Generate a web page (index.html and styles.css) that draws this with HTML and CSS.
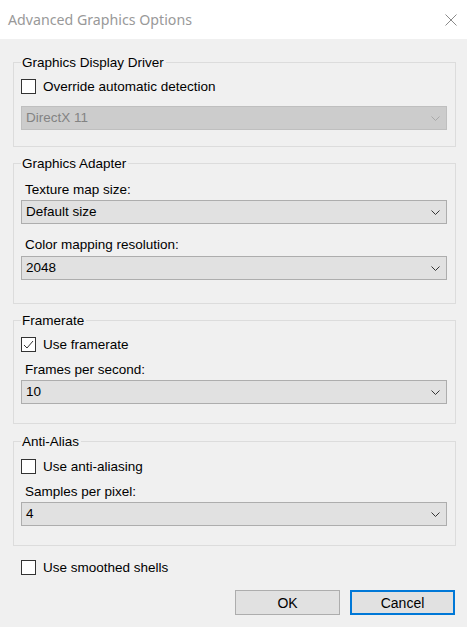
FILE: index.html
```html
<!DOCTYPE html>
<html>
<head>
<meta charset="utf-8">
<link rel="stylesheet" href="styles.css">
</head>
<body>
<div class="window">
  <div class="titlebar">
    <span class="title">Advanced Graphics Options</span>
    <svg class="close" width="12" height="12" viewBox="0 0 12 12"><path d="M0.5 0.5 L11.5 11.5 M11.5 0.5 L0.5 11.5" stroke="#8a8a8a" stroke-width="1" fill="none"/></svg>
  </div>
  <div class="content">
    <div class="group g1">
      <div class="legend">Graphics Display Driver</div>
      <div class="check c1"><span class="box"></span><span class="clabel">Override automatic detection</span></div>
      <div class="select disabled s1"><span class="val">DirectX 11</span><svg class="chev" width="9" height="5" viewBox="0 0 9 5"><path d="M0.5 0.5 L4.5 4.5 L8.5 0.5" stroke="#a8a8a8" fill="none"/></svg></div>
    </div>
    <div class="group g2">
      <div class="legend">Graphics Adapter</div>
      <div class="label l1">Texture map size:</div>
      <div class="select s2"><span class="val">Default size</span><svg class="chev" width="9" height="5" viewBox="0 0 9 5"><path d="M0.5 0.5 L4.5 4.5 L8.5 0.5" stroke="#333" fill="none"/></svg></div>
      <div class="label l2">Color mapping resolution:</div>
      <div class="select s3"><span class="val">2048</span><svg class="chev" width="9" height="5" viewBox="0 0 9 5"><path d="M0.5 0.5 L4.5 4.5 L8.5 0.5" stroke="#333" fill="none"/></svg></div>
    </div>
    <div class="group g3">
      <div class="legend">Framerate</div>
      <div class="check c1"><span class="box"><svg width="13" height="13" viewBox="0 0 13 13"><path d="M2 7 L5 10 L11 3" stroke="#333" stroke-width="1" fill="none"/></svg></span><span class="clabel">Use framerate</span></div>
      <div class="label l3">Frames per second:</div>
      <div class="select s2"><span class="val">10</span><svg class="chev" width="9" height="5" viewBox="0 0 9 5"><path d="M0.5 0.5 L4.5 4.5 L8.5 0.5" stroke="#333" fill="none"/></svg></div>
    </div>
    <div class="group g4">
      <div class="legend">Anti-Alias</div>
      <div class="check c4"><span class="box"></span><span class="clabel">Use anti-aliasing</span></div>
      <div class="label l3">Samples per pixel:</div>
      <div class="select s2"><span class="val">4</span><svg class="chev" width="9" height="5" viewBox="0 0 9 5"><path d="M0.5 0.5 L4.5 4.5 L8.5 0.5" stroke="#333" fill="none"/></svg></div>
    </div>
    <div class="check smooth"><span class="box"></span><span class="clabel">Use smoothed shells</span></div>
    <div class="buttons">
      <div class="btn">OK</div>
      <div class="btn default">Cancel</div>
    </div>
  </div>
</div>
</body>
</html>
```

FILE: styles.css
```css
html, body {
  margin: 0;
  padding: 0;
  background: #f0f0f0;
}
.window {
  width: 467px;
  height: 627px;
  background: #f0f0f0;
  font-family: "Liberation Sans", Arial, sans-serif;
  font-size: 13.5px;
  color: #000;
}
.titlebar {
  height: 39px;
  background: #ffffff;
  display: flex;
  align-items: center;
  justify-content: space-between;
  padding: 0 10px 0 8px;
  box-sizing: border-box;
}
.title {
  font-family: "Noto Sans", "Open Sans", sans-serif;
  font-size: 14.2px;
  color: #999999;
  line-height: 20px;
}
.close {
  display: block;
}
.content {
  padding: 0 11px 0 13px;
}
.group {
  border: 1px solid #dcdcdc;
  padding: 0 8px 0 7px;
}
.legend {
  margin-top: -8px;
  margin-left: 0;
  padding: 0 2px 0 1px;
  width: fit-content;
  height: 16px;
  line-height: 16px;
  background: #f0f0f0;
}
.g1 { margin-top: 23px; padding-bottom: 16px; }
.g2 { margin-top: 16px; padding-bottom: 23px; }
.g3 { margin-top: 16px; padding-bottom: 19px; }
.g4 { margin-top: 17px; padding-bottom: 19px; }

.check {
  display: flex;
  align-items: center;
  height: 15px;
}
.c1 { margin-top: 8px; }
.c4 { margin-top: 9px; }
.smooth { margin-top: 14px; margin-left: 8px; }
.box {
  width: 13px;
  height: 13px;
  border: 1px solid #333333;
  background: #ffffff;
  flex: none;
  display: block;
}
.box svg { display: block; }
.clabel {
  margin-left: 7px;
  line-height: 16px;
}
.label {
  height: 16px;
  line-height: 16px;
  padding-left: 4px;
}
.l1 { margin-top: 10px; }
.l2 { margin-top: 13px; }
.l3 { margin-top: 10px; }
.select {
  height: 24px;
  box-sizing: border-box;
  border: 1px solid #adadad;
  background: #e1e1e1;
  display: flex;
  align-items: center;
  justify-content: space-between;
  padding: 0 6px 0 4px;
}
.select .val { line-height: 16px; }
.chev { display: block; }
.disabled {
  background: #cccccc;
  border-color: #bfbfbf;
  color: #838383;
}
.s1 { margin-top: 12px; }
.s2 { margin-top: 2px; }
.s3 { margin-top: 3px; }
.buttons {
  display: flex;
  justify-content: flex-end;
  gap: 10px;
  margin-top: 15px;
  padding-right: 1px;
}
.btn {
  width: 105px;
  height: 25px;
  box-sizing: border-box;
  border: 1px solid #adadad;
  background: #e1e1e1;
  display: flex;
  align-items: center;
  justify-content: center;
  font-size: 14px;
}
.btn.default {
  border: 2px solid #0078d7;
}
```
